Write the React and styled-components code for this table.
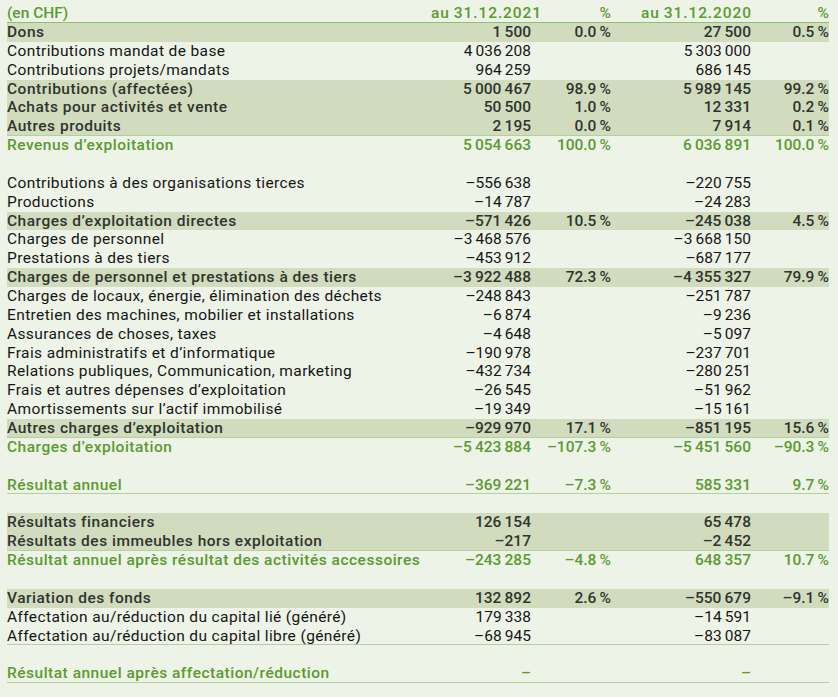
import React from "react";
import styled, { createGlobalStyle } from "styled-components";

const GlobalStyle = createGlobalStyle`
  html, body {
    margin: 0;
    padding: 0;
    background: #eef3e8;
  }
  body {
    font-family: Roboto, "Liberation Sans", sans-serif;
  }
`;

const t = (s) => (s ? s.replace(/ /g, "\u2009").replace(/-/g, "\u2013") : "");

// kind: plain | band | total | empty ; line: bottom rule
const rows = [
  { kind: "band", label: "Dons", a: "1 500", ap: "0.0 %", b: "27 500", bp: "0.5 %" },
  { kind: "plain", label: "Contributions mandat de base", a: "4 036 208", b: "5 303 000" },
  { kind: "plain", label: "Contributions projets/mandats", a: "964 259", b: "686 145" },
  { kind: "band", label: "Contributions (affectées)", a: "5 000 467", ap: "98.9 %", b: "5 989 145", bp: "99.2 %" },
  { kind: "band", label: "Achats pour activités et vente", a: "50 500", ap: "1.0 %", b: "12 331", bp: "0.2 %" },
  { kind: "band", label: "Autres produits", a: "2 195", ap: "0.0 %", b: "7 914", bp: "0.1 %", line: true },
  { kind: "total", label: "Revenus d’exploitation", a: "5 054 663", ap: "100.0 %", b: "6 036 891", bp: "100.0 %" },
  { kind: "empty" },
  { kind: "plain", label: "Contributions à des organisations tierces", a: "-556 638", b: "-220 755" },
  { kind: "plain", label: "Productions", a: "-14 787", b: "-24 283" },
  { kind: "band", label: "Charges d’exploitation directes", a: "-571 426", ap: "10.5 %", b: "-245 038", bp: "4.5 %" },
  { kind: "plain", label: "Charges de personnel", a: "-3 468 576", b: "-3 668 150" },
  { kind: "plain", label: "Prestations à des tiers", a: "-453 912", b: "-687 177" },
  { kind: "band", label: "Charges de personnel et prestations à des tiers", a: "-3 922 488", ap: "72.3 %", b: "-4 355 327", bp: "79.9 %" },
  { kind: "plain", label: "Charges de locaux, énergie, élimination des déchets", a: "-248 843", b: "-251 787" },
  { kind: "plain", label: "Entretien des machines, mobilier et installations", a: "-6 874", b: "-9 236" },
  { kind: "plain", label: "Assurances de choses, taxes", a: "-4 648", b: "-5 097" },
  { kind: "plain", label: "Frais administratifs et d’informatique", a: "-190 978", b: "-237 701" },
  { kind: "plain", label: "Relations publiques, Communication, marketing", a: "-432 734", b: "-280 251" },
  { kind: "plain", label: "Frais et autres dépenses d’exploitation", a: "-26 545", b: "-51 962" },
  { kind: "plain", label: "Amortissements sur l’actif immobilisé", a: "-19 349", b: "-15 161" },
  { kind: "band", label: "Autres charges d’exploitation", a: "-929 970", ap: "17.1 %", b: "-851 195", bp: "15.6 %", line: true },
  { kind: "total", label: "Charges d’exploitation", a: "-5 423 884", ap: "-107.3 %", b: "-5 451 560", bp: "-90.3 %" },
  { kind: "empty" },
  { kind: "total", label: "Résultat annuel", a: "-369 221", ap: "-7.3 %", b: "585 331", bp: "9.7 %", line: true },
  { kind: "empty" },
  { kind: "band", label: "Résultats financiers", a: "126 154", b: "65 478" },
  { kind: "band", label: "Résultats des immeubles hors exploitation", a: "-217", b: "-2 452", line: true },
  { kind: "total", label: "Résultat annuel après résultat des activités accessoires", a: "-243 285", ap: "-4.8 %", b: "648 357", bp: "10.7 %" },
  { kind: "empty" },
  { kind: "band", label: "Variation des fonds", a: "132 892", ap: "2.6 %", b: "-550 679", bp: "-9.1 %" },
  { kind: "plain", label: "Affectation au/réduction du capital lié (généré)", a: "179 338", b: "-14 591" },
  { kind: "plain", label: "Affectation au/réduction du capital libre (généré)", a: "-68 945", b: "-83 087", line: true },
  { kind: "empty" },
  { kind: "total", label: "Résultat annuel après affectation/réduction", a: "-", b: "-", line: true },
];

export default function App() {
  return (
    <>
      <GlobalStyle />
      <Page>
        <Table>
          <HeadRow>
            <Cell $spacing="0">(en CHF)</Cell>
            <Num $spacing="0.9px">{t("au 31.12.2021")}</Num>
            <Num>%</Num>
            <Num $spacing="0.9px">{t("au 31.12.2020")}</Num>
            <Num>%</Num>
          </HeadRow>
          {rows.map((r, i) =>
            r.kind === "empty" ? (
              <Row key={i} $kind="empty" />
            ) : (
              <Row key={i} $kind={r.kind} $line={r.line}>
                <Cell $spacing={r.kind === "plain" ? "0.38px" : "0.5px"}>{r.label}</Cell>
                <Num>{t(r.a)}</Num>
                <Num>{t(r.ap)}</Num>
                <Num>{t(r.b)}</Num>
                <Num>{t(r.bp)}</Num>
              </Row>
            )
          )}
        </Table>
      </Page>
    </>
  );
}

const Page = styled.div`
  padding: 4px 9px 0 7px;
`;

const Table = styled.div`
  display: flex;
  flex-direction: column;
  width: 822px;
`;

const BaseRow = styled.div`
  display: grid;
  grid-template-columns: 424px 100px 80px 140px 78px;
  height: 18.86px;
  line-height: 18.86px;
  font-size: 15.5px;
  box-sizing: border-box;
  white-space: nowrap;
`;

const HeadRow = styled(BaseRow)`
  height: 19px;
  color: #5b9a2f;
  font-weight: 500;
  border-bottom: 1.5px solid #8fc06a;
`;

const Row = styled(BaseRow)`
  background: ${(p) => (p.$kind === "band" ? "#d1dcbf" : "transparent")};
  color: ${(p) =>
    p.$kind === "total" ? "#5b9a2f" : p.$kind === "band" ? "#2f342e" : "#141614"};
  font-weight: ${(p) => (p.$kind === "plain" ? 400 : 500)};
  border-bottom: ${(p) => (p.$line ? "1.5px solid #b3d19b" : "none")};
`;

const Cell = styled.div`
  overflow: hidden;
  letter-spacing: ${(p) => p.$spacing || "0"};
`;

const Num = styled.div`
  text-align: right;
  letter-spacing: ${(p) => p.$spacing || "0"};
  margin-right: ${(p) => (p.$spacing ? `-${p.$spacing}` : "0")};
`;
